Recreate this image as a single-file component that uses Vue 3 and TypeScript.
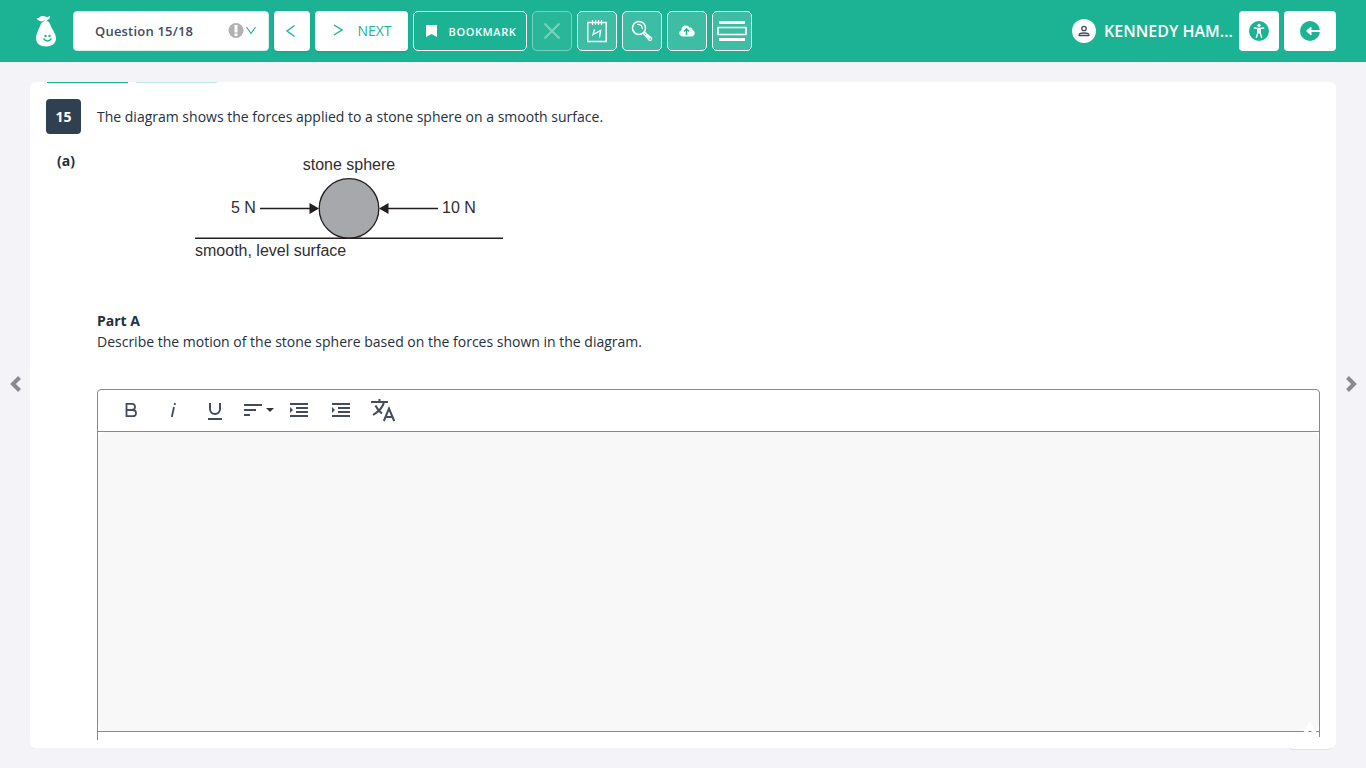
<script setup lang="ts">
import { ref } from 'vue'

const questions = Array.from({ length: 18 }, (_, i) => i + 1)
const current = ref(15)
const answer = ref('')
</script>

<template>
  <div class="page">
    <header class="bar">
      <svg class="logo" viewBox="0 0 22 34" width="22" height="34" aria-label="Pear" role="img">
        <path fill="#fff" d="M1.500 4.500L4 4C5 1.500 8 1.500 10.500 2.500L12 3.200L15.200 2L14.500 4.500C13.500 5.800 12 5.800 11.500 7C14.500 7.500 15 10 16.500 13.500C18.500 17.500 21 20.500 21 24.500C21 29.500 16.500 32.500 11 32.500S1 29.500 1 24.500C1 20.500 2.500 17.500 4.500 13.500C6 10 6.500 7.500 10 7L9.800 6.200C7.500 8.200 3.500 7.500 1.500 4.500Z" />
        <circle cx="10.500" cy="22" r="1.200" fill="#1cb394" /><circle cx="14.500" cy="22" r="1.200" fill="#1cb394" />
        <path d="M8.500 24.500Q12.500 29.500 16.500 24.500" fill="none" stroke="#1cb394" stroke-width="1.400" />
      </svg>
      <div class="picker">
        <select v-model="current" aria-label="Question">
          <option v-for="q in questions" :key="q" :value="q">Question {{ q }}/18</option>
        </select>
        <svg class="picker-icons" width="29" height="16" viewBox="0 0 29 16" aria-hidden="true">
          <circle cx="8" cy="7.500" r="7.500" fill="#b1b1b1" />
          <path d="M6.500 2h3v7.500h-3zM6.500 10.500h3v2.500h-3z" fill="#fff" />
          <path d="M18.500 4L23 10.500L27.500 4" fill="none" stroke="#1cb394" stroke-width="1.100" />
        </svg>
      </div>
      <button class="solid prev" type="button" aria-label="Previous">
        <svg width="12" height="14" viewBox="0 0 12 14"><path d="M10.500 1.500L3 7L10.500 12.500" fill="none" stroke="#1cb394" stroke-width="1.400" /></svg>
      </button>
      <button class="solid next" type="button">
        <svg width="12" height="14" viewBox="0 0 12 14"><path d="M3 2L11 7L3 12" fill="none" stroke="#1cb394" stroke-width="1.400" /></svg>
        <span>NEXT</span>
      </button>
      <button class="outline bookmark" type="button">
        <svg width="11" height="12" viewBox="0 0 11 12"><path d="M0 0h11v12L5.500 9L0 12Z" fill="#fff" /></svg>
        <span>BOOKMARK</span>
      </button>
      <button class="outline tool off" type="button" disabled aria-label="Cross out">
        <svg width="20" height="20" viewBox="0 0 20 20"><path d="M2.500 2.500L17.500 17.500M17.500 2.500L2.500 17.500" stroke="#fff" stroke-width="2.200" /></svg>
      </button>
      <button class="outline tool" type="button" aria-label="Scratchpad">
        <svg width="20" height="24" viewBox="0 0 20 24" fill="none" stroke="#fff">
          <path d="M.8 3.500H19.200V22.500H.8Z" stroke-width="1.400" /><path d="M5.500 1V6M8.500 1V6M11.500 1V6M14.500 1V6" stroke-width="1.200" />
          <path d="M7.500 10.500L6 15.500L13.500 11.500L12.500 18.500" stroke-width="1.400" />
        </svg>
      </button>
      <button class="outline tool" type="button" aria-label="Magnifier">
        <svg width="22" height="22" viewBox="0 0 22 22" fill="none" stroke="#fff">
          <circle cx="8" cy="8" r="6.500" stroke-width="1.500" /><path d="M6 4.500Q11 4 11.500 9" stroke-width="1.200" />
          <path d="M12.500 13.500L18 20Q19.500 21 20.500 19.500Q21 18.500 20 17.500L14 12.500ZM15 14.500L19 18.500" stroke-width="1.300" />
        </svg>
      </button>
      <button class="outline tool" type="button" aria-label="Upload">
        <svg width="16" height="12" viewBox="0 0 16 12">
          <path fill="#fff" d="M4 11.500C1.800 11.500.3 10 .3 8.200C.3 6.600 1.200 5.500 2.500 5C2.400 2.500 4.200.5 6.700.5C8.500.5 9.800 1.400 10.500 2.700C12.200 2.100 13.600 3.200 13.400 5C15 5.400 15.700 6.700 15.700 8.200C15.700 10 14.300 11.500 12.500 11.500Z" />
          <path d="M7.500 10V4M5 6.500L7.500 3.800L10 6.500" fill="none" stroke="#1cb394" stroke-width="1.400" />
        </svg>
      </button>
      <button class="outline tool" type="button" aria-label="Line reader">
        <svg width="30" height="22" viewBox="0 0 30 22"><path d="M2 1H28V4H2ZM2 18H28V21H2Z" fill="#fff" /><path d="M1 7.500H29V14.500H1Z" fill="none" stroke="#fff" stroke-width="1.600" /></svg>
      </button>
      <div class="user">
        <svg width="24" height="24" viewBox="0 0 24 24" aria-hidden="true">
          <circle cx="12" cy="12" r="12" fill="#fff" />
          <circle cx="12" cy="9.500" r="2.200" fill="none" stroke="#434b5d" stroke-width="1.300" />
          <path d="M7.200 16.500V15.500C7.500 13.500 16.500 13.500 16.800 15.500V16.500Z" fill="none" stroke="#434b5d" stroke-width="1.300" />
        </svg>
        <span>KENNEDY HAM...</span>
      </div>
      <button class="solid access" type="button" aria-label="Accessibility">
        <svg width="20" height="20" viewBox="0 0 20 20">
          <circle cx="10" cy="10" r="10" fill="#1cb394" /><circle cx="10" cy="4.300" r="1.600" fill="#fff" />
          <path d="M4.800 6.800L8.500 7.500H11.500L15.200 6.800M8.800 7.500V12L7.200 17M11.200 7.500V12L12.800 17" fill="none" stroke="#fff" stroke-width="1.300" /><path d="M8.300 7h3.400v5.500h-3.400z" fill="#fff" />
        </svg>
      </button>
      <button class="solid exit" type="button" aria-label="Exit">
        <svg width="20" height="20" viewBox="0 0 20 20"><circle cx="10" cy="10" r="10" fill="#1cb394" /><path d="M6.500 10L11 6V14Z" fill="#fff" stroke="#fff" /><path d="M10 9H20V11H10Z" fill="#fff" /></svg>
      </button>
    </header>

    <div class="stage">
      <button class="turn" type="button" aria-label="Previous question">
        <svg width="12" height="18" viewBox="0 0 12 18"><path d="M10.500 2.500L4 9L10.500 15.500" fill="none" stroke="#878a91" stroke-width="4" /></svg>
      </button>
      <main class="card">
        <div class="tabs"><i class="on"></i><i></i></div>
        <div class="scroll">
          <div class="row first">
            <span class="number">15</span>
            <p>The diagram shows the forces applied to a stone sphere on a smooth surface.</p>
          </div>
          <div class="row rest">
            <b class="part">(a)</b>
            <div class="content">
              <svg class="diagram" width="310" height="110" viewBox="0 0 310 110" role="img" aria-label="Forces on a stone sphere">
                <text x="154" y="20" text-anchor="middle">stone sphere</text>
                <text x="36" y="63">5 N</text>
                <text x="247" y="63">10 N</text>
                <text x="0" y="106">smooth, level surface</text>
                <circle cx="154" cy="58.500" r="29.800" fill="#a7a8ab" stroke="#231f20" stroke-width="1.300" />
                <path d="M65 58.500H116M192 58.500H243M0 88.300H308" stroke="#231f20" stroke-width="1.400" />
                <path d="M114.500 53L124 58.500L114.500 64ZM193.500 53L184 58.500L193.500 64Z" fill="#231f20" />
              </svg>
              <div class="prompt"><b>Part A</b><p>Describe the motion of the stone sphere based on the forces shown in the diagram.</p></div>
              <div class="editor">
                <div class="tools">
                  <button type="button" aria-label="Bold"><svg width="24" height="24" viewBox="0 0 24 24"><path d="M7.500 5.800H13Q16 5.800 16 8.800T13 12H7.500ZM7.500 12H13.500Q17 12 17 15.200T13.500 18.200H7.500Z" fill="none" stroke="#434b5d" stroke-width="1.800" /></svg></button>
                  <button type="button" aria-label="Italic"><svg width="24" height="24" viewBox="0 0 24 24"><path d="M13 9L10.800 19M14 5L13.600 7" stroke="#434b5d" stroke-width="1.800" /></svg></button>
                  <button type="button" aria-label="Underline"><svg width="24" height="24" viewBox="0 0 24 24"><path d="M7 5V11C7 17.500 17 17.500 17 11V5M5 21H19" fill="none" stroke="#434b5d" stroke-width="2" /></svg></button>
                  <button class="align" type="button" aria-label="Align"><svg width="32" height="24" viewBox="0 0 32 24"><path d="M2 7H20M2 12H14M2 17H8" stroke="#434b5d" stroke-width="2" /><path d="M24 10H32L28 14Z" fill="#333" /></svg></button>
                  <button type="button" aria-label="Decrease indent"><svg width="24" height="24" viewBox="0 0 24 24"><path d="M3 6H21M9 10H21M9 14H21M3 18H21" stroke="#434b5d" stroke-width="2" /><path d="M3 9L6 12L3 15Z" fill="#434b5d" /></svg></button>
                  <button type="button" aria-label="Increase indent"><svg width="24" height="24" viewBox="0 0 24 24"><path d="M3 6H21M9 10H21M9 14H21M3 18H21" stroke="#434b5d" stroke-width="2" /><path d="M3 9L6 12L3 15Z" fill="#434b5d" /></svg></button>
                  <button type="button" aria-label="Language"><svg width="24" height="24" viewBox="0 0 24 24"><path d="M0 4H17M8.500 1V4M13 4C12 9 7 14 2 17M4.500 7.500C6 11 9 14 11 15.500M12.800 23L18 10.500L23.200 23M14.500 19H21.500" fill="none" stroke="#434b5d" stroke-width="2" /></svg></button>
                </div>
                <div class="field"><textarea v-model="answer" aria-label="Answer"></textarea></div>
              </div>
            </div>
          </div>
        </div>
        <button class="float" type="button" aria-label="Scroll up">
          <svg width="20" height="16" viewBox="0 0 20 16"><path d="M3 16L10 4L17 16" fill="none" stroke="#fff" stroke-width="4" /></svg>
        </button>
      </main>
      <button class="turn" type="button" aria-label="Next question">
        <svg width="12" height="18" viewBox="0 0 12 18"><path d="M2.500 2.500L9 9L2.500 15.500" fill="none" stroke="#878a91" stroke-width="4" /></svg>
      </button>
    </div>
  </div>
</template>

<style>
body { margin: 0; }
</style>

<style scoped>
* { box-sizing: border-box; }
.page { height: 100vh; display: flex; flex-direction: column; overflow: hidden; background: #f3f3f8; font-family: "Open Sans", sans-serif; font-size: 14px; line-height: 21px; color: #24303d; }
button { font: inherit; padding: 0; border: 0; background: none; display: flex; align-items: center; justify-content: center; flex: none; cursor: pointer; }
svg { display: block; flex: none; }
p { margin: 0; }
.bar { flex: none; height: 62px; padding: 0 30px 0 35px; display: flex; align-items: center; gap: 5px; background: #1cb394; }
.logo { margin-right: 11px; }
.picker { position: relative; width: 196px; height: 40px; flex: none; }
.picker select { appearance: none; width: 100%; height: 100%; padding: 0 40px 0 21px; border: 1px solid #d9eee8; border-radius: 4px; background: #fff; color: #434b5d; font: 600 13px "Open Sans", sans-serif; letter-spacing: 0.2px; }
.picker-icons { position: absolute; right: 12px; top: 12px; pointer-events: none; }
.solid { height: 40px; background: #fff; border-radius: 4px; color: #1cb394; }
.prev { width: 36px; padding-right: 4px; }
.prev, .next { box-shadow: 0 1px 3px rgba(0, 0, 0, 0.12); }
.next { width: 93px; gap: 14px; padding-bottom: 2px; }
.outline { height: 40px; border: 1px solid #fff; border-radius: 5px; color: #fff; }
.bookmark { width: 114px; gap: 12px; padding-left: 2px; font-size: 11px; font-weight: 600; letter-spacing: 0.6px; }
.tool { width: 40px; background: rgba(255, 255, 255, 0.15); }
.off { opacity: 0.4; }
.user { margin-left: auto; margin-right: 1px; display: flex; align-items: center; gap: 8px; color: #fff; font-size: 16px; font-weight: 600; white-space: nowrap; }
.access { width: 40px; }
.exit { width: 52px; }
.stage { flex: 1; min-height: 0; display: flex; padding: 20px 0; }
.turn { width: 30px; padding-bottom: 62px; }
.card { position: relative; flex: 1; min-width: 0; display: flex; flex-direction: column; background: #fff; border-radius: 6px; padding-bottom: 8px; }
.tabs { display: flex; gap: 8px; height: 1px; flex: none; padding-left: 17px; }
.tabs i { width: 81px; background: #bce9df; }
.tabs .on { background: #1cb394; box-shadow: 0 1px 1px rgba(0, 0, 0, 0.08); }
.scroll { flex: 1; min-height: 0; overflow: hidden; padding: 16px 16px 0; }
.row { display: grid; grid-template-columns: 35px 1fr; column-gap: 16px; }
.first { align-items: center; }
.number { height: 35px; display: flex; align-items: center; justify-content: center; border-radius: 4px; background: #2f4050; color: #fff; font-weight: 700; }
.rest { padding-top: 16px; }
.part { padding-left: 11px; }
.diagram { margin-left: 98px; }
.diagram text { font: 16px "Liberation Sans", sans-serif; fill: #312d2f; }
.prompt { padding: 50px 0 37px; }
.editor { border: 1px solid #878a8c; border-radius: 4px 4px 0 0; height: 380px; }
.tools { display: flex; align-items: center; gap: 18px; height: 42px; padding: 0 0 2px 21px; border-bottom: 1px solid #878a8c; }
.tools .align { margin: 0 -5px 0 -3px; }
.field { height: 300px; border-bottom: 1px solid #878a8c; }
textarea { display: block; width: 100%; height: 100%; border: 0; border-radius: 8px; padding: 12px; resize: none; background: #f8f8f8; font: inherit; color: inherit; }
.float { position: absolute; right: 5px; bottom: -1px; width: 42px; height: 12px; background: #fff; border-radius: 0 0 4px 4px; box-shadow: 0 1px 1px rgba(0, 0, 0, 0.08); }
.float svg { position: absolute; left: 11px; bottom: 12px; }
</style>
